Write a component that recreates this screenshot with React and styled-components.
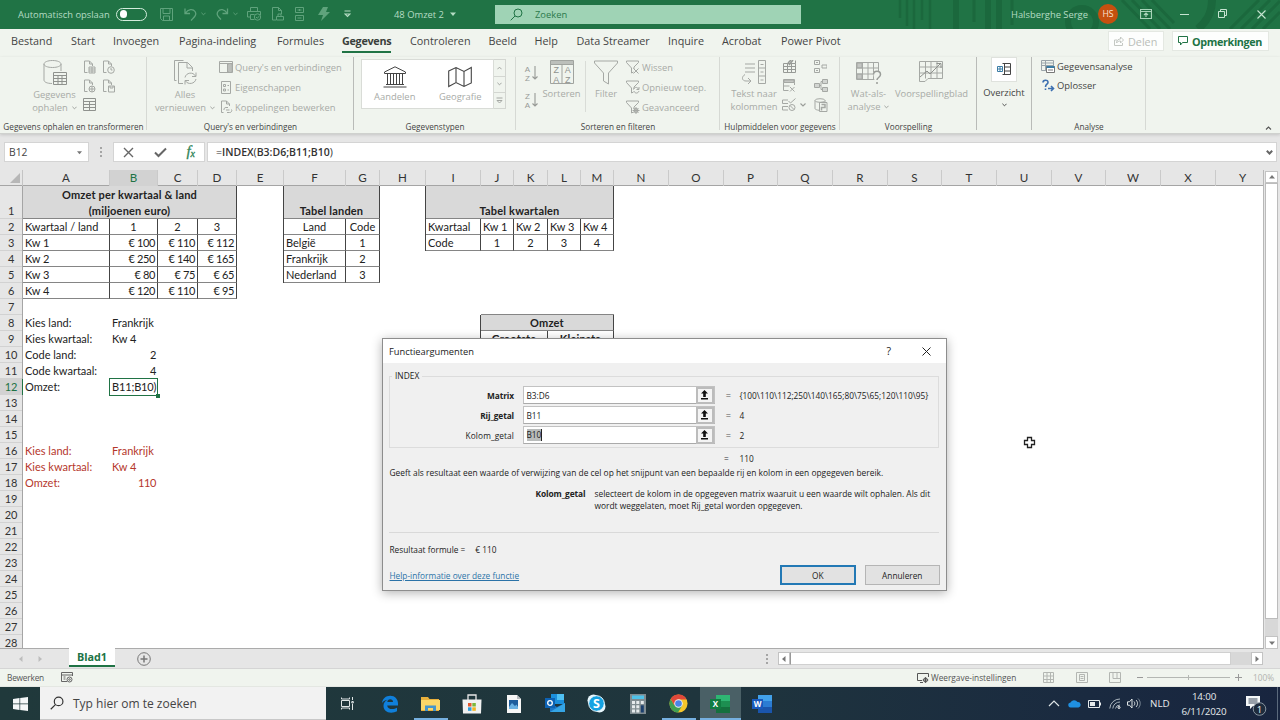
import React from "react";
import styled, { createGlobalStyle, css } from "styled-components";

const GlobalStyle = createGlobalStyle`
  * { box-sizing: border-box; }
  body { margin: 0; overflow: hidden; font-family: "Open Sans", "Noto Sans", sans-serif; }
`;

const Window = styled.div`
  position: relative;
  width: 1280px;
  height: 720px;
  display: flex;
  flex-direction: column;
  background: #e6e6e6;
  white-space: nowrap;
  color: #444;
`;

/* ---------- title bar ---------- */
const TitleBar = styled.header`
  height: 29px;
  flex: none;
  position: relative;
  background: #207345;
  color: #b5dcc4;
  font-size: 9.4px;
`;
const TitlePattern = styled.svg`
  position: absolute;
  right: 0;
  top: 0;
`;
const TitleItems = styled.div`
  position: relative;
  height: 28px;
  display: grid;
  align-items: center;
  grid-template-columns: 18px 98px 44px 24px 17px 15px 17px 14px 25px 23px 23px 26px 50px 56px 45px 306px 210px 87px 42px 40px 38px 39px 1fr;
  > svg { display: block; }
`;
const Toggle = styled.div`
  width: 31px;
  height: 13px;
  border: 1.2px solid #d3ecdc;
  border-radius: 7px;
  padding: 1.6px 2.5px;
  &::after {
    content: "";
    display: block;
    width: 7.5px;
    height: 7.5px;
    border-radius: 50%;
    background: #fff;
  }
`;
const TitleSearch = styled.div`
  height: 19px;
  background: #9fd3b5;
  color: #2c7a4d;
  display: flex;
  align-items: center;
  padding-left: 15px;
  gap: 12px;
`;
const Avatar = styled.div`
  width: 20px;
  height: 20px;
  border-radius: 50%;
  background: #c5500f;
  color: #fbe3d3;
  font-size: 8.6px;
  display: flex;
  align-items: center;
  justify-content: center;
`;

/* ---------- ribbon ---------- */
const Tabs = styled.nav`
  height: 28px;
  flex: none;
  background: #f0f4ee;
  display: flex;
  padding-left: 11px;
  font-size: 10.8px;
  color: #444;
`;
const Tab = styled.div`
  width: ${(p) => p.$w}px;
  line-height: 24px;
  span { display: inline-block; height: 23.5px; }
  ${(p) => p.$active && css`
    font-weight: 700;
    letter-spacing: -0.3px;
    color: #3a3f3b;
    span { border-bottom: 2.5px solid #207345; }
  `}
`;
const TabButton = styled.div`
  height: 20px;
  margin: 2px 8px 0 0;
  width: ${(p) => p.$w}px;
  background: #fdfefd;
  border: 1px solid #e4e8e2;
  display: flex;
  align-items: center;
  padding-left: 5px;
  gap: 4px;
  color: ${(p) => (p.$primary ? "#207345" : "#b9bdb8")};
  font-weight: ${(p) => (p.$primary ? 700 : 400)};
  letter-spacing: ${(p) => (p.$primary ? "-0.35px" : "0")};
`;
const Ribbon = styled.section`
  height: 77px;
  flex: none;
  background: #f0f4ee;
  border-bottom: 1px solid #cfd1ce;
  box-shadow: 0 1px 3px rgba(0, 0, 0, 0.15);
  display: flex;
  color: #a8aba7;
  font-size: 9.4px;
  position: relative;
  z-index: 1;
  svg { display: block; flex: none; }
`;
const Group = styled.div`
  width: ${(p) => p.$w}px;
  position: relative;
  display: flex;
  flex-direction: column;
  &::after {
    content: "";
    position: absolute;
    right: 0;
    top: 0;
    width: 1px;
    height: 73px;
    background: ${(p) => (p.$dark ? "#b9bbb8" : "#d6d9d4")};
  }
`;
const GroupBody = styled.div`
  height: 63px;
  display: flex;
  padding-left: ${(p) => p.$pl || 0}px;
`;
const GroupLabel = styled.div`
  height: 14px;
  line-height: 15px;
  text-align: center;
  font-size: 8.2px;
  color: #444;
`;
const Big = styled.div`
  width: ${(p) => p.$w}px;
  padding-top: ${(p) => (p.$on ? 0 : 3)}px;
  display: flex;
  flex-direction: column;
  align-items: center;
  line-height: 13px;
  color: ${(p) => (p.$on ? "#444" : "inherit")};
  > svg { margin-bottom: 2px; }
`;
const WithArrow = styled.div`
  display: flex;
  align-items: center;
  gap: 4px;
`;
const Rows = styled.div`
  padding-left: ${(p) => p.$pl || 0}px;
  color: ${(p) => (p.$on ? "#444" : "inherit")};
`;
const Row = styled.div`
  height: ${(p) => p.$h || 20}px;
  display: flex;
  align-items: center;
  gap: 2px;
`;
const IconGrid = styled.div`
  display: grid;
  align-content: start;
  justify-items: center;
  align-items: center;
  grid-template-columns: ${(p) => p.$cols};
  grid-auto-rows: 19px;
`;
const Gallery = styled.div`
  margin-top: 1.5px;
  width: 133px;
  height: 50px;
  background: #fff;
  border: 1px solid #d9dcd7;
  display: flex;
`;
const GalleryItem = styled.div`
  width: 66px;
  padding-top: 6px;
  display: flex;
  flex-direction: column;
  align-items: center;
  gap: 1.5px;
  line-height: 16px;
`;
const GalleryArrows = styled.div`
  margin-top: 1.5px;
  width: 12px;
  height: 50px;
  border: 1px solid #d3d6d1;
  border-left: 0;
  display: grid;
  grid-template-rows: 1fr 1fr 1fr;
  place-items: center;
  > * + * { border-top: 1px solid #d3d6d1; }
  > * { width: 100%; height: 100%; display: grid; place-items: center; }
`;
const Divider = styled.div`
  width: 1px;
  height: 51px;
  margin: 4px 0 0 ${(p) => p.$ml || 0}px;
  background: #d9dcd7;
`;
const OutlineBox = styled.div`
  width: 26px;
  height: 25px;
  background: #fff;
  border: 1px solid #dfe2dd;
  display: grid;
  place-items: center;
  margin-bottom: 4px;
`;
const ArrowBelow = styled.div`
  padding-top: 4px;
`;
const Collapse = styled.div`
  margin-left: auto;
  padding: 69px 7px 0 0;
`;

/* ---------- formula bar ---------- */
const FormulaBar = styled.div`
  height: 36px;
  flex: none;
  display: flex;
  align-items: center;
  padding-left: 4px;
  font-size: 10.3px;
`;
const Box = styled.div`
  height: 20px;
  width: ${(p) => p.$w}px;
  margin-left: ${(p) => p.$ml || 0}px;
  background: #fff;
  border: 1px solid #d4d4d4;
  display: flex;
  align-items: center;
  justify-content: space-between;
  padding: ${(p) => p.$pad || "0 6px 0 4px"};
`;
const Dots = styled.div`
  width: 2px;
  height: 10px;
  margin-left: ${(p) => p.$ml}px;
  background: repeating-linear-gradient(#a5a5a5 0 2px, transparent 2px 4px);
`;
const Formula = styled.span`
  font-size: 10.5px;
  color: #333;
  b { font-weight: 600; }
`;
const FxLabel = styled.em`
  font-family: "Liberation Serif", serif;
  font-size: 15px;
  line-height: 14px;
  color: #2f8457;
  -webkit-text-stroke: 0.3px #2f8457;
  sub { font-size: 10px; vertical-align: -1px; }
`;

/* ---------- sheet ---------- */
const colWidths = [87, 48, 40, 39, 47, 62, 34, 46, 55, 33, 34, 33, 33, 55, 55, 54, 55, 55, 54, 55, 55, 54, 55, 55, 54];
const letters = "ABCDEFGHIJKLMNOPQRSTUVWXY".split("");

const SheetArea = styled.div`
  height: 479px;
  flex: none;
  display: flex;
`;
const Sheet = styled.div`
  width: 1264px;
  flex: none;
  height: 479px;
  overflow: hidden;
  border-bottom: 1px solid #ababab;
  border-right: 1px solid #b8b8b8;
  font-family: Lato, "Open Sans", sans-serif;
  font-size: 11px;
`;
const HeaderRow = styled.div`
  height: 16px;
  display: grid;
  grid-template-columns: 23px ${colWidths.map((w) => w + "px").join(" ")};
  border-bottom: 1px solid #a5a5a5;
`;
const Corner = styled.div`
  border-right: 1px solid #c4c4c4;
  display: flex;
  justify-content: flex-end;
  padding: 3px 2px 0 0;
`;
const ColHead = styled.div`
  text-align: center;
  font-size: 11.6px;
  line-height: 16px;
  color: ${(p) => (p.$on ? "#207345" : "#333")};
  background: ${(p) => (p.$on ? "#d2d2d2" : "transparent")};
  border-right: 1px solid #cacaca;
  ${(p) => p.$on && css`box-shadow: 0 1px 0 #207345;`}
`;
const SheetBody = styled.div`
  display: flex;
`;
const RowHeads = styled.div`
  width: 23px;
  flex: none;
  border-right: 1px solid #a5a5a5;
`;
const RowHead = styled.div`
  height: ${(p) => (p.$first ? 33 : 16)}px;
  display: flex;
  align-items: flex-end;
  justify-content: center;
  line-height: 14px;
  font-size: 11px;
  letter-spacing: -0.2px;
  border-bottom: 1px solid #d2d2d2;
  color: ${(p) => (p.$on ? "#207345" : "#333")};
  background: ${(p) => (p.$on ? "#d2d2d2" : "transparent")};
  ${(p) => p.$on && css`box-shadow: 1px 0 0 #207345;`}
`;
const Cells = styled.div`
  flex: none;
  height: 465px;
  background: #fff;
  display: grid;
  grid-template-columns: ${colWidths.map((w) => w + "px").join(" ")};
  grid-template-rows: 33px repeat(27, 16px);
`;
const Cell = styled.div`
  grid-column: ${(p) => p.$c} / span ${(p) => p.$span || 1};
  grid-row: ${(p) => p.$r};
  display: flex;
  align-items: flex-end;
  justify-content: ${(p) => ({ r: "flex-end", c: "center" }[p.$align] || "flex-start")};
  text-align: center;
  line-height: ${(p) => (p.$r === 1 ? 16 : p.$line ? 14 : 16)}px;
  padding: 0 2px;
  color: ${(p) => (p.$red ? "#b5372c" : "#222")};
  font-weight: ${(p) => (p.$head ? 700 : 400)};
  letter-spacing: ${(p) => (p.$head ? "0.18px" : p.$align === "r" ? "-0.35px" : "0")};
  background: ${(p) => (p.$head === "fill" ? "#d9d9d9" : "transparent")};
  span { margin-bottom: ${(p) => (p.$r === 1 ? -1 : 0)}px; }
  ${(p) => p.$line && css`
    border-right: 1px solid #444;
    border-bottom: 1px solid #858585;
    box-shadow: ${p.$first ? "-1px 0 0 #444" : "none"};
  `}
`;
const TopBorder = styled.div`
  grid-row: 7;
  grid-column: ${(p) => p.$c};
  border-bottom: 1px solid #858585;
`;
const Selected = styled.div`
  grid-column: 2;
  grid-row: 12;
  margin: -1px 0 -1px -1px;
  border: 1.5px solid #207345;
  background: #fff;
  color: #222;
  line-height: 15px;
  padding-left: 2px;
  letter-spacing: -0.15px;
  position: relative;
  &::after {
    content: "";
    position: absolute;
    right: -2.5px;
    bottom: -2.5px;
    width: 4px;
    height: 4px;
    background: #207345;
  }
`;
const VScroll = styled.div`
  margin-left: 1px;
  width: 13px;
  padding-top: 1px;
  display: flex;
  flex-direction: column;
`;
const ScrollBtn = styled.div`
  width: ${(p) => p.$w || 13}px;
  height: ${(p) => p.$h || 13}px;
  background: #fff;
  border: 1px solid #c3c3c3;
  display: grid;
  place-items: center;
`;
const VThumb = styled.div`
  height: 436px;
  background: #fff;
  border: 1px solid #bcbcbc;
`;
const VTrack = styled.div`
  height: 17px;
  background: #d8d8d8;
`;

/* ---------- sheet tabs, status bar ---------- */
const SheetTabs = styled.div`
  height: 20px;
  flex: none;
  display: flex;
  align-items: center;
  border-bottom: 1px solid #d5d5d5;
  svg { display: block; }
`;
const NavArrows = styled.div`
  width: 69px;
  padding-left: 18px;
  display: flex;
  gap: 13px;
`;
const SheetTab = styled.div`
  width: 46px;
  height: 19px;
  margin-top: -2px;
  background: #fff;
  border-bottom: 2px solid #207345;
  color: #207345;
  font-weight: 700;
  font-size: 10.8px;
  line-height: 17px;
  text-align: center;
`;
const AddSheet = styled.div`
  margin-left: 22px;
  width: 600px;
`;
const HScroll = styled.div`
  margin-left: 10px;
  display: flex;
  width: 485px;
`;
const HThumb = styled.div`
  width: 441px;
  background: #fff;
  border: 1px solid #d0d0d0;
  border-left-color: #999;
`;
const HTrack = styled.div`
  width: 20px;
  background: #d8d8d8;
`;
const StatusBar = styled.div`
  height: 18px;
  flex: none;
  background: #f0f4ee;
  display: grid;
  align-items: center;
  grid-template-columns: 7px 54px 856px 14px 112px 33px 33px 28px 10px 88px 18px 1fr;
  font-size: 8.3px;
  color: #555;
  border-bottom: 1px solid #e4e7e2;
  svg { display: block; }
`;
const StatusText = styled.span`
  letter-spacing: -0.2px;
`;
const ZoomLine = styled.div`
  width: 83px;
  height: 1px;
  background: #b4b7b3;
  position: relative;
  &::after {
    content: "";
    position: absolute;
    left: 41px;
    top: -2px;
    width: 1px;
    height: 5px;
    background: #b4b7b3;
  }
`;
const Faded = styled.span`
  color: #b0b3af;
`;

/* ---------- function arguments dialog ---------- */
const Dialog = styled.div`
  position: absolute;
  z-index: 3;
  left: 382px;
  top: 338px;
  width: 565px;
  height: 253px;
  border: 1px solid #8d8d8d;
  background: #f0f0f0;
  box-shadow: 0 2px 10px rgba(0, 0, 0, 0.3);
  font-size: 8.3px;
  color: #222;
  display: flex;
  flex-direction: column;
`;
const DialogTitle = styled.div`
  height: 24px;
  background: #fff;
  display: flex;
  align-items: center;
  padding: 0 15px 0 6px;
  font-size: 9.3px;
  span { flex: 1; }
  b { font-weight: 400; margin-right: 31px; font-size: 10.5px; }
`;
const Fieldset = styled.fieldset`
  margin: 7px 7px 0 6px;
  padding: 0;
  height: 78px;
  min-width: 0;
  border: 1px solid #dcdcdc;
  legend {
    margin-left: 2px;
    padding: 0 3px;
    line-height: 12px;
    font-size: 8.4px;
  }
`;
const ArgRow = styled.div`
  height: 20px;
  display: grid;
  align-items: center;
  grid-template-columns: 124px 8.5px 192px 11.5px 13.5px 1fr;
  position: relative;
  top: 3px;
`;
const ArgName = styled.div`
  text-align: right;
  font-weight: ${(p) => (p.$bold ? 700 : 400)};
  letter-spacing: ${(p) => (p.$bold ? "-0.1px" : "0.1px")};
`;
const ArgInput = styled.div`
  height: 18px;
  border: 1px solid #c2c2c2;
  border-bottom-color: #aaa;
  background: #fff;
  display: flex;
  align-items: center;
  justify-content: space-between;
  padding-left: 3px;
`;
const Marked = styled.span`
  background: #b9bcbb;
  border-right: 1px solid #222;
  line-height: 12px;
`;
const PickBtn = styled.div`
  width: 18px;
  height: 17px;
  border: 2px solid #bcbcbc;
  background: #f4f4f4;
  display: grid;
  place-items: center;
`;
const Equals = styled.div`
  color: ${(p) => (p.$dark ? "#333" : "#9a9a9a")};
  font-weight: ${(p) => (p.$dark ? 400 : 700)};
`;
const ResultRow = styled.div`
  height: 14px;
  margin: 3px 0 0 341px;
  display: grid;
  grid-template-columns: 15.5px 1fr;
  align-items: center;
`;
const Description = styled.div`
  height: 15px;
  line-height: 16px;
  padding-left: 6.5px;
  font-size: 8.4px;
  letter-spacing: 0.015px;
`;
const ArgHelp = styled.div`
  height: 53px;
  margin: 0 7px 0 6px;
  padding-top: 8px;
  border-bottom: 1px solid #d9d9d9;
  display: grid;
  grid-template-columns: 196.5px 1fr;
  column-gap: 9px;
  line-height: 11.6px;
  font-size: 8.4px;
  b { text-align: right; letter-spacing: -0.1px; }
`;
const FormulaResult = styled.div`
  padding: 11px 0 0 6.5px;
  line-height: 12px;
  display: flex;
  gap: 10px;
`;
const DialogFooter = styled.div`
  margin-top: 9px;
  padding: 0 6px 0 6.5px;
  display: flex;
  align-items: center;
  gap: 9px;
`;
const HelpLink = styled.a`
  flex: 1;
  color: #2b73a8;
  text-decoration: underline;
`;
const DialogButton = styled.div`
  width: 75.5px;
  height: 20px;
  border: ${(p) => (p.$primary ? "2px solid #2379b5" : "1px solid #b5b5b5")};
  background: #e2e2e2;
  display: grid;
  place-items: center;
`;
const Pointer = styled.svg`
  position: absolute;
  left: 1023px;
  top: 436px;
`;

/* ---------- taskbar ---------- */
const Taskbar = styled.footer`
  height: 33px;
  flex: none;
  background: linear-gradient(90deg, #20393b, #1f353d 55%, #1a2a40 85%, #18253f);
  display: flex;
  color: #e6eaec;
  svg { display: block; }
`;
const Start = styled.div`
  width: 40px;
  display: grid;
  place-items: center;
`;
const TaskSearch = styled.div`
  width: 286px;
  background: #f2f2f2;
  border-bottom: 1px solid #c8c8c8;
  display: flex;
  align-items: center;
  padding-left: 10px;
  gap: 9px;
  font-size: 12px;
  color: #444;
`;
const TaskItem = styled.div`
  width: ${(p) => p.$w || 41.33}px;
  display: grid;
  place-items: center;
  position: relative;
  background: ${(p) => (p.$active ? "#4a6066" : "transparent")};
  &::after {
    content: "";
    position: absolute;
    bottom: 0;
    left: ${(p) => (p.$active ? 0 : 4)}px;
    right: ${(p) => (p.$active ? 0 : 4)}px;
    height: 2px;
    background: ${(p) => (p.$open || p.$active ? "#76b0e0" : "transparent")};
  }
`;
const Tray = styled.div`
  margin-left: auto;
  width: 232px;
  display: grid;
  align-items: center;
  grid-template-columns: 20px 20px 21px 18px 23px 22px 64px 41px 3px;
  font-size: 9.8px;
`;
const Clock = styled.div`
  text-align: center;
  font-size: 9.8px;
  line-height: 15px;
  letter-spacing: -0.15px;
`;
const Notice = styled.div`
  padding: 4px 0 0 9px;
`;
const ShowDesktop = styled.div`
  width: 1px;
  height: 33px;
  background: #5b6a7c;
`;

/* ---------- icons ---------- */
const Icon = ({ w, h, vw, vh, color = "#a5a8a4", sw = 1, children }) => (
    <svg width={w} height={h} viewBox={`0 0 ${vw || w} ${vh || h}`} fill="none" stroke={color} strokeWidth={sw}>
        {children}
    </svg>
);
const Chevron = ({ color = "#9a9d99", up, w = 5 }) => (
    <Icon w={w} h={4} vw={6} vh={4} color={color} sw={1.1}>
        <path d={up ? "M.5 3.5 3 1l2.500 2.500" : "M.5.5 3 3 5.500.5"} />
    </Icon>
);
const Caret = ({ color = "#777", dir = "down", size = 6 }) => {
    const paths = { down: "M0 1.500h6L3 5z", up: "M0 4.500h6L3 1z", left: "M4.500 0v6L1 3z", right: "M1.500 0v6L5 3z" };
    return (
        <svg width={size} height={size} viewBox="0 0 6 6"><path d={paths[dir]} fill={color} /></svg>
    );
};
const Magnifier = ({ size = 13, color, sw = 1 }) => (
    <Icon w={size} h={size} vw={13} vh={13} color={color} sw={sw}>
        <circle cx="8" cy="5" r="4" /><path d="M5 8 .700 12.300" />
    </Icon>
);
const Sheetlet = ({ children }) => (
    <Icon w={13} h={14}>
        <path d="M4.500 12.500h-3V1h5l3 3v2M6.500 1v3h3" />{children}
    </Icon>
);
const Funnel = ({ children }) => (
    <Icon w={14} h={14}>
        <path d="M.5 1h12v1.500L8 7v2M.5 1v1.500L5.500 8v5l2-1" />{children}
    </Icon>
);

function SortIcon({ a, b }) {
    return (
        <svg width="15" height="20" viewBox="0 0 15 20">
            <g fill="#979a96" fontSize="8" fontFamily="Liberation Sans" textAnchor="middle">
                <text x="3.500" y="8.500">{a}</text><text x="3.500" y="17.500">{b}</text>
            </g>
            <path d="M11 3v13M8.500 13.500l2.500 2.500 2.500-2.500" fill="none" stroke="#979a96" strokeWidth="1.100" />
        </svg>
    );
}

const PickIcon = () => (
    <svg width="9" height="10" viewBox="0 0 9 10"><path d="M4.500 0 8 3.500H5.800V7H3.200V3.500H1zM1 8h7v1.500H1z" fill="#111" /></svg>
);

function OfficeIcon({ colors, letter }) {
    return (
        <svg width="20" height="18" viewBox="0 0 20 18">
            <path d="M6 0h14v6H6z" fill={colors[0]} /><path d="M6 6h14v6H6z" fill={colors[1]} /><path d="M6 12h14v6H6z" fill={colors[2]} />
            <path d="M0 4h11v10H0z" fill={colors[3]} />
            <text x="5.500" y="12" fontSize="8" fontWeight="700" textAnchor="middle" fill="#fff">{letter}</text>
        </svg>
    );
}

function QuickAccess() {
    const c = "#5fa37c";
    return (
        <>
            <Icon w={13} h={13} color={c}><path d="M.5.5h12v12h-10l-2-2zM3 .5v5h7v-5M3.500 12V8h6v4" /></Icon>
            <Icon w={13} h={13} color={c} sw={1.3}><path d="M1 .5v5h5M1.500 5C4 1 9 .5 11 3.500s0 5-4 9" /></Icon>
            <Chevron color={c} />
            <Icon w={13} h={13} color={c} sw={1.3}><path d="M11.500.5v5h-5M11 5C8.500 1 4 .5 2 3.500s0 5 3 8" /></Icon>
            <Chevron color={c} />
            <Icon w={15} h={14} color={c}><path d="M3.500 4.500v-4h7v4M3.500 10h-3V4.500h13V8M3.500 7.500v5h4M3.500 7.500h4" /><circle cx="10.500" cy="10" r="3.200" /><path d="m9 10 1.200 1.200L12.500 9" /></Icon>
            <Icon w={13} h={14} color={c}><path d="M4 13H.5V.5h6l3 3V7M6.500.5v3h3M4.500 13V9.500h7V13zM6 9.500V7h3v2.500" /></Icon>
            <Icon w={10} h={14} color={c}><path d="M.5.5h8v5h-8zM.5 8.500h8v5h-8zM2.500 3h4M4.500 2v2M2.500 11h4" /></Icon>
            <svg width="12" height="14" viewBox="0 0 12 14"><path d="M5 0h5L8 5h4L3 14l2-6H0z" fill={c} /></svg>
            <Icon w={7} h={8} color="#b5dcc4" sw={1.1}><path d="M.5 1h6M1 4h5L3.500 6.500z" /></Icon>
        </>
    );
}

const tabs = [["Bestand", 60], ["Start", 42], ["Invoegen", 66], ["Pagina-indeling", 98], ["Formules", 65], ["Gegevens", 68],
    ["Controleren", 78.5], ["Beeld", 46], ["Help", 42], ["Data Streamer", 91.5], ["Inquire", 54], ["Acrobat", 59], ["Power Pivot", 327]];

// [row, column, text, options]
const cells = [
    [1, 1, <>Omzet per kwartaal &amp; land<br />(miljoenen euro)</>, { span: 4, align: "c", head: "fill", line: 1 }],
    [2, 1, "Kwartaal / land", { line: 1 }], [2, 2, "1", { line: 1, align: "c" }], [2, 3, "2", { line: 1, align: "c" }], [2, 4, "3", { line: 1, align: "c" }],
    ...[["Kw 1", 100, 110, 112], ["Kw 2", 250, 140, 165], ["Kw 3", 80, 75, 65], ["Kw 4", 120, 110, 95]].flatMap((row, i) =>
        row.map((v, j) => [i + 3, j + 1, j ? "€ " + v : v, { line: 1, align: j ? "r" : "l" }])),
    [1, 6, "Tabel landen", { span: 2, align: "c", head: "fill", line: 1, first: 1 }],
    [2, 6, "Land", { line: 1, align: "c", first: 1 }], [2, 7, "Code", { line: 1, align: "c" }],
    ...["België", "Frankrijk", "Nederland"].flatMap((land, i) => [
        [i + 3, 6, land, { line: 1, first: 1 }], [i + 3, 7, i + 1, { line: 1, align: "c" }]]),
    [1, 9, "Tabel kwartalen", { span: 5, align: "c", head: "fill", line: 1, first: 1 }],
    [2, 9, "Kwartaal", { line: 1, first: 1 }], [3, 9, "Code", { line: 1, first: 1 }],
    ...[1, 2, 3, 4].flatMap((n) => [[2, 9 + n, "Kw " + n, { line: 1 }], [3, 9 + n, n, { line: 1, align: "c" }]]),
    [8, 10, "Omzet", { span: 4, align: "c", head: "fill", line: 1, first: 1 }],
    [9, 10, "Grootste", { span: 2, align: "c", head: "plain", line: 1, first: 1 }],
    [9, 12, "Kleinste", { span: 2, align: "c", head: "plain", line: 1 }],
    [8, 1, "Kies land:"], [8, 2, "Frankrijk"], [9, 1, "Kies kwartaal:"], [9, 2, "Kw 4"],
    [10, 1, "Code land:"], [10, 2, "2", { align: "r" }], [11, 1, "Code kwartaal:"], [11, 2, "4", { align: "r" }],
    [12, 1, "Omzet:"],
    [16, 1, "Kies land:", { red: 1 }], [16, 2, "Frankrijk", { red: 1 }], [17, 1, "Kies kwartaal:", { red: 1 }], [17, 2, "Kw 4", { red: 1 }],
    [18, 1, "Omzet:", { red: 1 }], [18, 2, "110", { red: 1, align: "r" }],
];
// empty cells above "Omzet" that carry its top border
const topBorders = [10, 11, 12, 13];

function RibbonGroups() {
    return (
        <Ribbon>
            <Group $w={147}>
                <GroupBody $pl={28}>
                    <Big $w={53}>
                        <Icon w={24} h={26}>
                            <path d="M18 11V4c0-1.800-3.500-3.500-8.500-3.500S1 2.200 1 4v16c0 2 3 3.500 8 3.500M1 4c0 2 3.500 3.500 8.500 3.500S18 6 18 4" />
                            <path d="M10.500 12.500h13v12h-13zM10.500 15.500h13M10.500 18.500h13M10.500 21.500h13M15 15v9M19 15v9" stroke="#8f928e" />
                        </Icon>
                        <div>Gegevens</div>
                        <WithArrow>ophalen <Chevron /></WithArrow>
                    </Big>
                    <IconGrid $cols="17px 20px">
                        <Sheetlet><path d="M6 7h6v6H6zM6 9h6M6 11h6M9 7v6" /></Sheetlet>
                        <Sheetlet><circle cx="9" cy="10" r="3.300" /><path d="M9 8v2h1.500" /></Sheetlet>
                        <Sheetlet><circle cx="9" cy="10" r="3" /><path d="M6 10h6M9 7v6" /></Sheetlet>
                        <Sheetlet><path d="M6.500 7h6v6h-6zM8 7v2h3V7" /></Sheetlet>
                        <Icon w={13} h={13} color="#8f928e"><path d="M.5.5h12v12H.5zM.5 3.500h12M.5 6.500h12M.5 9.500h12M6.500 3.500v9" /></Icon>
                    </IconGrid>
                </GroupBody>
                <GroupLabel>Gegevens ophalen en transformeren</GroupLabel>
            </Group>

            <Group $w={207} $dark>
                <GroupBody $pl={7}>
                    <Big $w={62}>
                        <Icon w={24} h={26}>
                            <path d="M3.500 20.500h-2V.5h9" /><path d="M10 23.500H5.500V2.500h9l5 5V11M14 2.500V8h5.500" />
                            <path d="M12 17.500c1-5 8-6 10.500-1.500M23 12.500V16.500h-4M23 19c-1 5-8 6-10.500 2M12 24.500V20.500h4" />
                        </Icon>
                        <div>Alles</div>
                        <WithArrow>vernieuwen <Chevron /></WithArrow>
                    </Big>
                    <Rows $pl={3}>
                        <Row><Icon w={14} h={12}><path d="M9 3h4v8H9z" fill="#d2d5d1" /><path d="M.5.5h13v11H.5zM.5 2.500h13M8.500 2.500v9M10 5h2.500M10 7h2.500M10 9h2.500" /></Icon> Query's en verbindingen</Row>
                        <Row><Icon w={14} h={13}><path d="M2.500.5h9v12h-9zM4.500 3.500h2v2h-2zM4.500 8h2v2h-2zM8.500 4.500h1.500M8.500 9h1.500" /></Icon> Eigenschappen</Row>
                        <Row><Icon w={14} h={14}><path d="M4.500 12.500h-2V1h5l3 3v2M7.500 1v3h3" /><path d="M5 10a2 2 0 0 1 2-2.500h2M7 10h3.500M12.500 9.500a2 2 0 0 1-2 3H8" /></Icon> Koppelingen bewerken</Row>
                    </Rows>
                </GroupBody>
                <GroupLabel>Query's en verbindingen</GroupLabel>
            </Group>

            <Group $w={162}>
                <GroupBody $pl={7}>
                    <Gallery>
                        <GalleryItem>
                            <Icon w={24} h={22} color="#444">
                                <path d="M1.500 6 12 .8 22.500 6v1.500h-21zM3 18.500h18M.5 21h23M4.500 8v10M7.500 8v10M10.500 8v10M13.500 8v10M16.500 8v10M19.500 8v10" />
                            </Icon>
                            Aandelen
                        </GalleryItem>
                        <GalleryItem>
                            <Icon w={24} h={22} color="#444" sw={1.1}>
                                <path d="M.7 5 8 1.500l8 4 7.300-4V17L16 20.500l-8-4-7.300 4zM8 1.500v15M16 5.500v15" />
                            </Icon>
                            Geografie
                        </GalleryItem>
                    </Gallery>
                    <GalleryArrows>
                        <div><Chevron up /></div><div><Chevron /></div>
                        <div><Icon w={7} h={7}><path d="M.5 1h6M1 3.500h5L3.500 6z" /></Icon></div>
                    </GalleryArrows>
                </GroupBody>
                <GroupLabel>Gegevenstypen</GroupLabel>
            </Group>

            <Group $w={204}>
                <GroupBody $pl={8}>
                    <Rows>
                        <Row $h={32}><SortIcon a="A" b="Z" /></Row>
                        <Row $h={22}><SortIcon a="Z" b="A" /></Row>
                    </Rows>
                    <Big $w={45}>
                        <svg width="24" height="25" viewBox="0 0 24 25">
                            <path d="M.5.5h23v23H.5zM.5 4.500h23M12 4.500v19" fill="none" stroke="#a0a39f" />
                            <path d="M1 1h22v3H1z" fill="#bcbfbb" />
                            <g fill="#8f928e" fontSize="9" fontFamily="Liberation Sans" textAnchor="middle"><text x="6.300" y="12.500">Z</text><text x="6.300" y="22.500">A</text><text x="17.800" y="12.500">A</text><text x="17.800" y="22.500">Z</text></g>
                        </svg>
                        Sorteren
                    </Big>
                    <Divider $ml={1} />
                    <Big $w={40}>
                        <Icon w={24} h={25}><path d="M.5 1h23v2L14.500 13v11l-5-3v-8L.5 3z" /></Icon>
                        Filter
                    </Big>
                    <Rows>
                        <Row><Funnel><path d="m7.500 8.500 5 5M12.500 8.500l-5 5" /></Funnel> Wissen</Row>
                        <Row><Funnel><path d="M13 7v2.500h-2.500M12.500 9C11 6.500 8 7 7.500 9.500M8 11c.5 2.500 4 3 5 0" /></Funnel> Opnieuw toep.</Row>
                        <Row><Funnel><circle cx="10" cy="10.500" r="2" /><path d="M10 7v7M6.500 10.500h7M7.500 8l5 5M12.500 8l-5 5" /></Funnel> Geavanceerd</Row>
                    </Rows>
                </GroupBody>
                <GroupLabel>Sorteren en filteren</GroupLabel>
            </Group>

            <Group $w={120}>
                <GroupBody $pl={8}>
                    <Big $w={52}>
                        <Icon w={26} h={25}>
                            <path d="M17.500.5h7v23h-7zM17.500 8h7M17.500 16h7M19.500 4.500h3M19.500 12h3M19.500 20h3M4 4h10M4 8h10M4 12h10" />
                            <path d="M4 14.500C0 17 1 21 5 21h4M7 18l3 3-3 3" />
                        </Icon>
                        <div>Tekst naar</div>
                        <div>kolommen</div>
                    </Big>
                    <IconGrid $cols="18px 9px 27px">
                        <Icon w={13} h={13} color="#979a96"><path d="M.5 3.500h12v9H.5zM.5 6.500h12M.5 9.500h12M4.500 3.500v9M8.500 3.500v9M12.500 .5v3" /><path d="m10 0-4 5M8 0 5 3" strokeWidth="1.500" /></Icon>
                        <i />
                        <Icon w={13} h={13}><path d="M.5.5h5v4h-5zM.5 8.500h5v4h-5zM8 5h5v3H8zM2 2.500h2M2 10.500h2" /></Icon>
                        <Icon w={13} h={13}><path d="M1 1h10v2.500H1z" fill="#c4c6c3" /><path d="M.5.5h11v3H.5zM.5 3.500v8h5M11.500 3.500V6M.5 7h6" /><path d="m7 8 4.500 4.500M11.500 8 7 12.500" /></Icon>
                        <i />
                        <Icon w={14} h={13}><path d="M.5 4.500h5v4h-5zM8.500.5h5v4h-5zM8.500 8.500h5v4h-5z" fill="#d2d5d1" /><path d="M5.500 6.500H7v-4h1.500M7 6.500v4h1.500" /></Icon>
                        <Icon w={14} h={13}><path d="M6 2H.5v3.500H6M6 8.500H.5V12H6M6.500 3l2 2 5-4.500" /><circle cx="10" cy="9.500" r="3" /><path d="m8 7.500 4 4" /></Icon>
                        <Chevron w={6} />
                        <Icon w={14} h={14}><ellipse cx="6" cy="2.500" rx="5" ry="1.800" /><path d="M1 2.500v8c0 1 2 1.500 4 1.800M11 2.500V4M5.500 4.500h7.500v9H5.500z" /><path d="M7.500 6.500h3.500v3h-3.500v3" strokeWidth="1.500" /></Icon>
                    </IconGrid>
                </GroupBody>
                <GroupLabel>Hulpmiddelen voor gegevens</GroupLabel>
            </Group>

            <Group $w={137} $dark>
                <GroupBody $pl={4}>
                    <Big $w={49}>
                        <Icon w={26} h={25}>
                            <path d="M1 3h5v5H1zM1 14h5v5H1z" fill="#c4c6c3" />
                            <path d="M.5 2.500h22v17H.5zM.5 8h22M.5 14h22M6.500 2.500v17M12 2.500v17M17.500 2.500v17" />
                            <path d="M17 12h8v11h-6z" fill="#f0f4ee" stroke="none" />
                            <path d="M17.500 14.500c0-4.500 7-4.500 7 0 0 3-3.500 3-3.500 5.500M21 22v2" stroke="#999c98" strokeWidth="1.500" />
                        </Icon>
                        <div>Wat-als-</div>
                        <WithArrow>analyse <Chevron /></WithArrow>
                    </Big>
                    <Big $w={77}>
                        <Icon w={25} h={25}>
                            <path d="M.5 1.500h23v17H9l-3 3H.5zM.5 7h23M.5 13h23M6.500 1.500v17M12 1.500v17M18 1.500v17" />
                            <path d="m1 17 7-6 3 3 10-10M17.500 3.500H22V8" stroke="#8f928e" />
                        </Icon>
                        Voorspellingblad
                    </Big>
                </GroupBody>
                <GroupLabel>Voorspelling</GroupLabel>
            </Group>

            <Group $w={55} $dark>
                <Big $w={54} $on>
                    <OutlineBox>
                        <Icon w={14} h={13} color="#444"><path d="M7.500.5h6v11h-6zM7.500 4h6M7.500 8h6M5.500.5H8M5.500 11.500H8" /><path d="M.5 3.500h5v5h-5zM3 3.500v5M.5 6h5" stroke="#3a7ca5" /></Icon>
                    </OutlineBox>
                    Overzicht
                    <ArrowBelow><Chevron color="#444" /></ArrowBelow>
                </Big>
            </Group>

            <Group $w={114}>
                <GroupBody $pl={9}>
                    <Rows $on>
                        <Row $h={19}><Icon w={14} h={13} color="#777"><path d="M.5.5h12v10H.5zM.5 3h12M.5 5.500h12M4.500.5v10" stroke="#9aa4aa" /><path d="M5.500 6.500h8v6h-8z" fill="#fff" /><path d="M5.500 7h8" stroke="#3a7ca5" strokeWidth="2" /><path d="M7 10h5" /></Icon> Gegevensanalyse</Row>
                        <Row $h={19}><Icon w={14} h={13} color="#3c6fb0" sw={1.6}><path d="M2 3.500c0-3 5-3 5-.3C7 5.500 4.500 5 4.500 8M4.500 9.500v1.500M7 9.500h5M10 7l2.500 2.500L10 12" /></Icon> Oplosser</Row>
                    </Rows>
                </GroupBody>
                <GroupLabel>Analyse</GroupLabel>
            </Group>
            <Collapse><Chevron up w={9} color="#555" /></Collapse>
        </Ribbon>
    );
}

function FunctionDialog() {
    const args = [["Matrix", "B3:D6", "{100\\110\\112;250\\140\\165;80\\75\\65;120\\110\\95}", true], ["Rij_getal", "B11", "4", true], ["Kolom_getal", "B10", "2", false]];
    return (
        <Dialog>
            <DialogTitle>
                <span>Functieargumenten</span>
                <b>?</b>
                <Icon w={9} h={9} color="#222"><path d="m.5.5 8 8M8.500.5l-8 8" /></Icon>
            </DialogTitle>
            <Fieldset>
                <legend>INDEX</legend>
                {args.map(([name, ref, value, bold]) => (
                    <ArgRow key={name}>
                        <ArgName $bold={bold}>{name}</ArgName>
                        <i />
                        <ArgInput>
                            {bold ? <span>{ref}</span> : <Marked>{ref}</Marked>}
                            <PickBtn><PickIcon /></PickBtn>
                        </ArgInput>
                        <i />
                        <Equals>=</Equals>
                        <div>{value}</div>
                    </ArgRow>
                ))}
            </Fieldset>
            <ResultRow><Equals $dark>=</Equals><div>110</div></ResultRow>
            <Description>Geeft als resultaat een waarde of verwijzing van de cel op het snijpunt van een bepaalde rij en kolom in een opgegeven bereik.</Description>
            <ArgHelp>
                <b>Kolom_getal</b>
                <div>selecteert de kolom in de opgegeven matrix waaruit u een waarde wilt ophalen. Als dit<br />wordt weggelaten, moet Rij_getal worden opgegeven.</div>
            </ArgHelp>
            <FormulaResult><span>Resultaat formule =</span><span>€ 110</span></FormulaResult>
            <DialogFooter>
                <HelpLink>Help-informatie over deze functie</HelpLink>
                <DialogButton $primary>OK</DialogButton>
                <DialogButton>Annuleren</DialogButton>
            </DialogFooter>
        </Dialog>
    );
}

function TaskIcons() {
    return (
        <>
            <TaskItem $w={43}>
                <Icon w={15} h={13} color="#dfe5e6"><path d="M1.500 3.500h8v6h-8zM1.500.5v1.500h8V.5M1.500 12.500V11h8v1.500M12.500 0v3M12.500 7v6" /><path d="M11.800 4.500h1.500v1.500h-1.500z" /></Icon>
            </TaskItem>
            <TaskItem>
                <svg width="18" height="18" viewBox="0 0 18 18"><path d="M1 8.200C1.500 3.500 5 .8 9.200.8c4.800 0 7.800 3.500 7.800 7.600v2H6.200c.2 2.600 2.500 3.600 5 3.600 1.800 0 3.400-.5 4.800-1.300v3.600c-1.600.9-3.700 1.400-5.800 1.400-4.700 0-7.700-2.900-7.700-7 0-2.700 1.500-4.900 4-6C3.500 5.300 1.800 6.600 1 8.200zM6.300 7h5.700c0-1.800-1.100-2.700-2.800-2.700S6.500 5.400 6.300 7z" fill="#1080dc" /></svg>
            </TaskItem>
            <TaskItem $open>
                <svg width="19" height="16" viewBox="0 0 19 16"><path d="M0 1h7l1.500 2H18v12H0z" fill="#e9b03c" /><path d="M0 4h19v10H0z" fill="#fbd769" /><path d="M4 9.500h11V15h-3v-3H7v3H4z" fill="#4596cd" /></svg>
            </TaskItem>
            <TaskItem>
                <svg width="20" height="20" viewBox="0 0 20 20"><path d="M6 6V1h8v5" fill="none" stroke="#e8e8e8" strokeWidth="1.300" /><path d="M.5 5.500h19l-.5 14H1z" fill="#f1f1f1" /><path d="M6 9h3.500v3.500H6z" fill="#e3572d" /><path d="M10.300 9h3.500v3.500h-3.500z" fill="#7db83a" /><path d="M6 13.300h3.500v3.500H6z" fill="#2e9ddb" /><path d="M10.300 13.300h3.500v3.500h-3.500z" fill="#f3b521" /></svg>
            </TaskItem>
            <TaskItem>
                <svg width="14" height="18" viewBox="0 0 14 18"><path d="M0 0h10l4 4v14H0z" fill="#f6f6f6" /><path d="M2 5h9v9H2z" fill="#1e5c9c" /><path d="m2 12 3-4 3 3 1.500-1.500L11 12v2H2z" fill="#6ab0e2" /><path d="M10 0v4h4z" fill="#b8bcc0" /></svg>
            </TaskItem>
            <TaskItem>
                <svg width="20" height="19" viewBox="0 0 20 19"><path d="M6 0h13v10H6z" fill="#1b8fdb" /><path d="M12 0h7v6h-7z" fill="#4fc0f2" /><path d="M5 9 12 13l8-4v9H5z" fill="#1c74c4" /><path d="m5 18 15-9v9z" fill="#35a5e5" /><path d="M0 4h10v10H0z" fill="#0d62b3" /><circle cx="5" cy="9" r="2.300" fill="none" stroke="#fff" strokeWidth="1.300" /></svg>
            </TaskItem>
            <TaskItem>
                <svg width="19" height="19" viewBox="0 0 19 19"><circle cx="6.500" cy="6.500" r="6" fill="#e9f7fd" /><circle cx="12.500" cy="12.500" r="6" fill="#e9f7fd" /><circle cx="9.500" cy="9.500" r="7.800" fill="#15a2e2" stroke="#e9f7fd" /><text x="9.500" y="14" fontSize="12.500" fontWeight="700" textAnchor="middle" fill="#fff">S</text></svg>
            </TaskItem>
            <TaskItem>
                <svg width="16" height="20" viewBox="0 0 16 20"><path d="M0 0h16v20H0z" fill="#7f8c91" /><path d="M2 1.500h12v3.500H2z" fill="#4fc3ea" /><path d="M2 7h3v3H2zM6.300 7h3v3h-3zM2 11.300h3v3H2zM6.300 11.300h3v3h-3zM2 15.500h3v3H2zM6.300 15.500h3v3h-3zM10.800 7h3v3h-3z" fill="#e5eaec" /><path d="M10.800 11.300h3v7.200h-3z" fill="#1b3f6d" /></svg>
            </TaskItem>
            <TaskItem $open>
                <svg width="19" height="19" viewBox="0 0 20 20"><circle cx="10" cy="10" r="9.500" fill="#f5c52c" /><path d="M10 10 5.500 11.500 1.800 5.200A9.500 9.500 0 0 0 9.500 19.500L14 12z" fill="#3fa052" /><path d="M10 10 5.500 11.500 1.800 5.200A9.500 9.500 0 0 1 18.500 5.700H10z" fill="#e0483a" /><circle cx="10" cy="10" r="4.500" fill="#f1f1f1" /><circle cx="10" cy="10" r="3.500" fill="#4a85e8" /></svg>
            </TaskItem>
            <TaskItem $active>
                <OfficeIcon colors={["#2fb673", "#1d8f51", "#15703e", "#107c41"]} letter="X" />
            </TaskItem>
            <TaskItem>
                <OfficeIcon colors={["#42a1ea", "#2b7cd3", "#1a55ac", "#185abd"]} letter="W" />
            </TaskItem>
        </>
    );
}

export default function App() {
    return (
        <Window>
            <GlobalStyle />
            <TitleBar>
                <TitlePattern width="390" height="29" viewBox="0 0 390 29">
                    <g stroke="#1b683d" fill="none" strokeWidth="3">
                        <path d="M10 0v18M17 0v26M24 0v29M32 0v20M40 0v29" strokeWidth="2.500" />
                        <path d="M66 0v29M98 0v29M109 0v29" strokeWidth="6" />
                        <path d="M84 0v22M122 0v25" />
                        <circle cx="192" cy="22" r="14" strokeWidth="6" />
                        <path d="m232 0 28 29M242 0l28 29M252 0l28 29M262 0l22 23" />
                        <path d="M322 0c0 14-6 22-14 29" strokeWidth="8" />
                        <path d="m340 29 29-29M351 29 380 0M362 29 390 1M373 29l17-17" />
                    </g>
                </TitlePattern>
                <TitleItems>
                    <i />
                    <span>Automatisch opslaan</span>
                    <Toggle />
                    <QuickAccess />
                    <span>48 Omzet 2</span>
                    <Caret color="#b5dcc4" />
                    <TitleSearch><Magnifier color="#207345" /> Zoeken</TitleSearch>
                    <i />
                    <span>Halsberghe Serge</span>
                    <Avatar>HS</Avatar>
                    <Icon w={12} h={10} color="#a7d3b8" sw={1.2}><path d="M.5.5h11v9H.5zM.5 2.500h11M6 8V4.500M4 6l2-2 2 2" /></Icon>
                    <Icon w={10} h={3} color="#c6e4d1"><path d="M0 1.500h9" /></Icon>
                    <Icon w={10} h={10} color="#c6e4d1"><path d="M.5 2.500h6v6h-6zM2.500 2.500v-2h6v6h-2" /></Icon>
                    <Icon w={9} h={9} color="#c6e4d1" sw={1.1}><path d="m.5.5 8 8M8.500.5l-8 8" /></Icon>
                </TitleItems>
            </TitleBar>

            <Tabs>
                {tabs.map(([name, w]) => <Tab key={name} $w={w} $active={name === "Gegevens"}><span>{name}</span></Tab>)}
                <TabButton $w={56}><Icon w={10} h={10} color="#c4c8c3"><path d="M3 4H.5v5.500h8V7M2.500 7c0-3 2-4 4-4V1l3 3-3 3V5c-2 0-3 .5-4 2z" /></Icon> Delen</TabButton>
                <TabButton $w={97} $primary><Icon w={10} h={10} color="#207345"><path d="M.5.5h9v6h-5L2.500 9V6.500h-2z" /></Icon> Opmerkingen</TabButton>
            </Tabs>

            <RibbonGroups />

            <FormulaBar>
                <Box $w={85}>B12 <Caret size={5} /></Box>
                <Dots $ml={11} />
                <Box $w={92} $ml={11} $pad="0 9px">
                    <Icon w={11} h={11} color="#666" sw={1.4}><path d="m1 1 9 9M10 1l-9 9" /></Icon>
                    <Icon w={13} h={11} color="#666" sw={2}><path d="m1 5.500 3.500 3.500L12 1.500" /></Icon>
                    <FxLabel>f<sub>x</sub></FxLabel>
                </Box>
                <Box $w={1070} $ml={2} $pad="0 3px 0 8px">
                    <Formula>=<b>INDEX</b>(<b>B3:D6;B11;B10</b>)</Formula>
                    <Icon w={7} h={5} color="#666" sw={2}><path d="m.8.8 2.700 2.700L6.200.8" /></Icon>
                </Box>
            </FormulaBar>

            <SheetArea>
                <Sheet>
                    <HeaderRow>
                        <Corner><svg width="10" height="10"><path d="M10 0v10H0z" fill="#b7b7b7" /></svg></Corner>
                        {letters.map((l) => <ColHead key={l} $on={l === "B"}>{l}</ColHead>)}
                    </HeaderRow>
                    <SheetBody>
                        <RowHeads>
                            {Array.from({ length: 28 }, (_, i) => <RowHead key={i} $first={i === 0} $on={i === 11}>{i + 1}</RowHead>)}
                        </RowHeads>
                        <Cells>
                            {topBorders.map((c) => <TopBorder key={c} $c={c} />)}
                            {cells.map(([r, c, text, o = {}]) => (
                                <Cell key={r + "-" + c} $r={r} $c={c} $span={o.span} $align={o.align} $head={o.head} $line={o.line} $first={o.first} $red={o.red}>
                                    <span>{text}</span>
                                </Cell>
                            ))}
                            <Selected>B11;B10)</Selected>
                        </Cells>
                    </SheetBody>
                </Sheet>
                <VScroll>
                    <ScrollBtn $h={12}><Caret dir="up" /></ScrollBtn>
                    <VThumb />
                    <VTrack />
                    <ScrollBtn><Caret /></ScrollBtn>
                </VScroll>
            </SheetArea>

            <SheetTabs>
                <NavArrows><Caret dir="left" color="#bdbdbd" /><Caret dir="right" color="#bdbdbd" /></NavArrows>
                <SheetTab>Blad1</SheetTab>
                <AddSheet><Icon w={14} h={14} color="#777"><circle cx="7" cy="7" r="6.300" /><path d="M7 3.500v7M3.500 7h7" strokeWidth="1.500" /></Icon></AddSheet>
                <Dots $ml={29} />
                <HScroll>
                    <ScrollBtn $w={12}><Caret dir="left" /></ScrollBtn>
                    <HThumb /><HTrack />
                    <ScrollBtn $w={12}><Caret dir="right" /></ScrollBtn>
                </HScroll>
            </SheetTabs>

            <StatusBar>
                <i />
                <StatusText>Bewerken</StatusText>
                <Icon w={12} h={11} color="#666"><path d="M6 9.500H.5v-9h11V4M.5 3h11M2.500 5h2M2.500 7h2" /><circle cx="8.500" cy="7.500" r="2.500" /><circle cx="8.500" cy="7.500" r=".8" /></Icon>
                <Icon w={12} h={11} color="#555"><path d="M5 8.500H.5v-7h11V5M3 10.500h3" /><circle cx="8.500" cy="8" r="2" /><path d="M8.500 5.200v5.600M5.700 8h5.600" /></Icon>
                <span>Weergave-instellingen</span>
                <Icon w={11} h={11} color="#b3b6b2"><path d="M.5.5h10v10H.5zM.5 4h10M.5 7.500h10M4 .5v10M7.500.5v10" /></Icon>
                <Icon w={12} h={11} color="#b3b6b2"><path d="M.5.5h11v10H.5zM3.500 2.500h5v6h-5zM4.500 4.500h3M4.500 6.500h3" /></Icon>
                <Icon w={12} h={11} color="#b3b6b2"><path d="M.5.5h11v10H.5zM4 .5v6h4v-6M8 6.500h3.500" /></Icon>
                <Icon w={7} h={3} color="#999"><path d="M0 1.500h6" /></Icon>
                <ZoomLine />
                <Icon w={7} h={7} color="#999"><path d="M0 3.500h7M3.500 0v7" /></Icon>
                <Faded>100%</Faded>
            </StatusBar>

            <Taskbar>
                <Start><svg width="15" height="14" viewBox="0 0 15 14"><path d="M0 2 6.500 1v5.600H0zM7.200.900 15 0v6.600H7.200zM0 7.300h6.500V13L0 12zM7.200 7.300H15V14l-7.800-1z" fill="#f4f7f8" /></svg></Start>
                <TaskSearch><Magnifier size={14} color="#333" sw={1.1} /> Typ hier om te zoeken</TaskSearch>
                <TaskIcons />
                <Tray>
                    <Icon w={12} h={7} color="#dfe5e6" sw={1.2}><path d="m1 6 5-5 5 5" /></Icon>
                    <svg width="13" height="9" viewBox="0 0 13 9"><path d="M3 8.500A2.500 2.500 0 0 1 2.500 3.500 4 4 0 0 1 9.500 3a2.800 2.800 0 0 1 1 5.500z" fill="#1f8fe0" /></svg>
                    <svg width="13" height="8" viewBox="0 0 13 8"><path d="M.5.500h11v7H.5z" fill="none" stroke="#e6eaec" /><path d="M2 2h5v4H2zM11.500 2.500H13v3h-1.500z" fill="#e6eaec" /></svg>
                    <Icon w={12} h={11} color="#aab5be"><path d="M.8 10.500A10 10 0 0 1 11 1M3.800 10.500A7 7 0 0 1 11 4M6.500 10.500A4.500 4.500 0 0 1 11 7" /><circle cx="10" cy="9.500" r="1" stroke="#fff" /></Icon>
                    <Icon w={14} h={11} color="#dfe5e6"><path d="M.5 3.800h2L5 1v9L2.500 7.200h-2zM7 3.500c1 1 1 3 0 4M9 2c2 2 2 5 0 7" /><path d="M11 .5c3 3 3 7 0 10" stroke="#7b8996" /></Icon>
                    <span>NLD</span>
                    <Clock>14:00<br />6/11/2020</Clock>
                    <Notice>
                        <svg width="22" height="22" viewBox="0 0 22 22"><path d="M1 1h14v10H8l-3 3v-3H1z" fill="#f4f7f8" /><path d="M3.500 4h9M3.500 6h9M3.500 8h9" stroke="#3d4b5c" /><circle cx="14.500" cy="14" r="6.300" fill="#1e2c3d" stroke="#8894a0" /><text x="14.500" y="17.500" fontSize="9.500" textAnchor="middle" fill="#fff">1</text></svg>
                    </Notice>
                    <ShowDesktop />
                </Tray>
            </Taskbar>

            <FunctionDialog />
            <Pointer width="13" height="13" viewBox="0 0 13 13">
                <path d="M4.500 1.500h4v3h3v4h-3v3h-4v-3h-3v-4h3z" fill="#fff" stroke="#222" strokeWidth="1.300" />
            </Pointer>
        </Window>
    );
}
